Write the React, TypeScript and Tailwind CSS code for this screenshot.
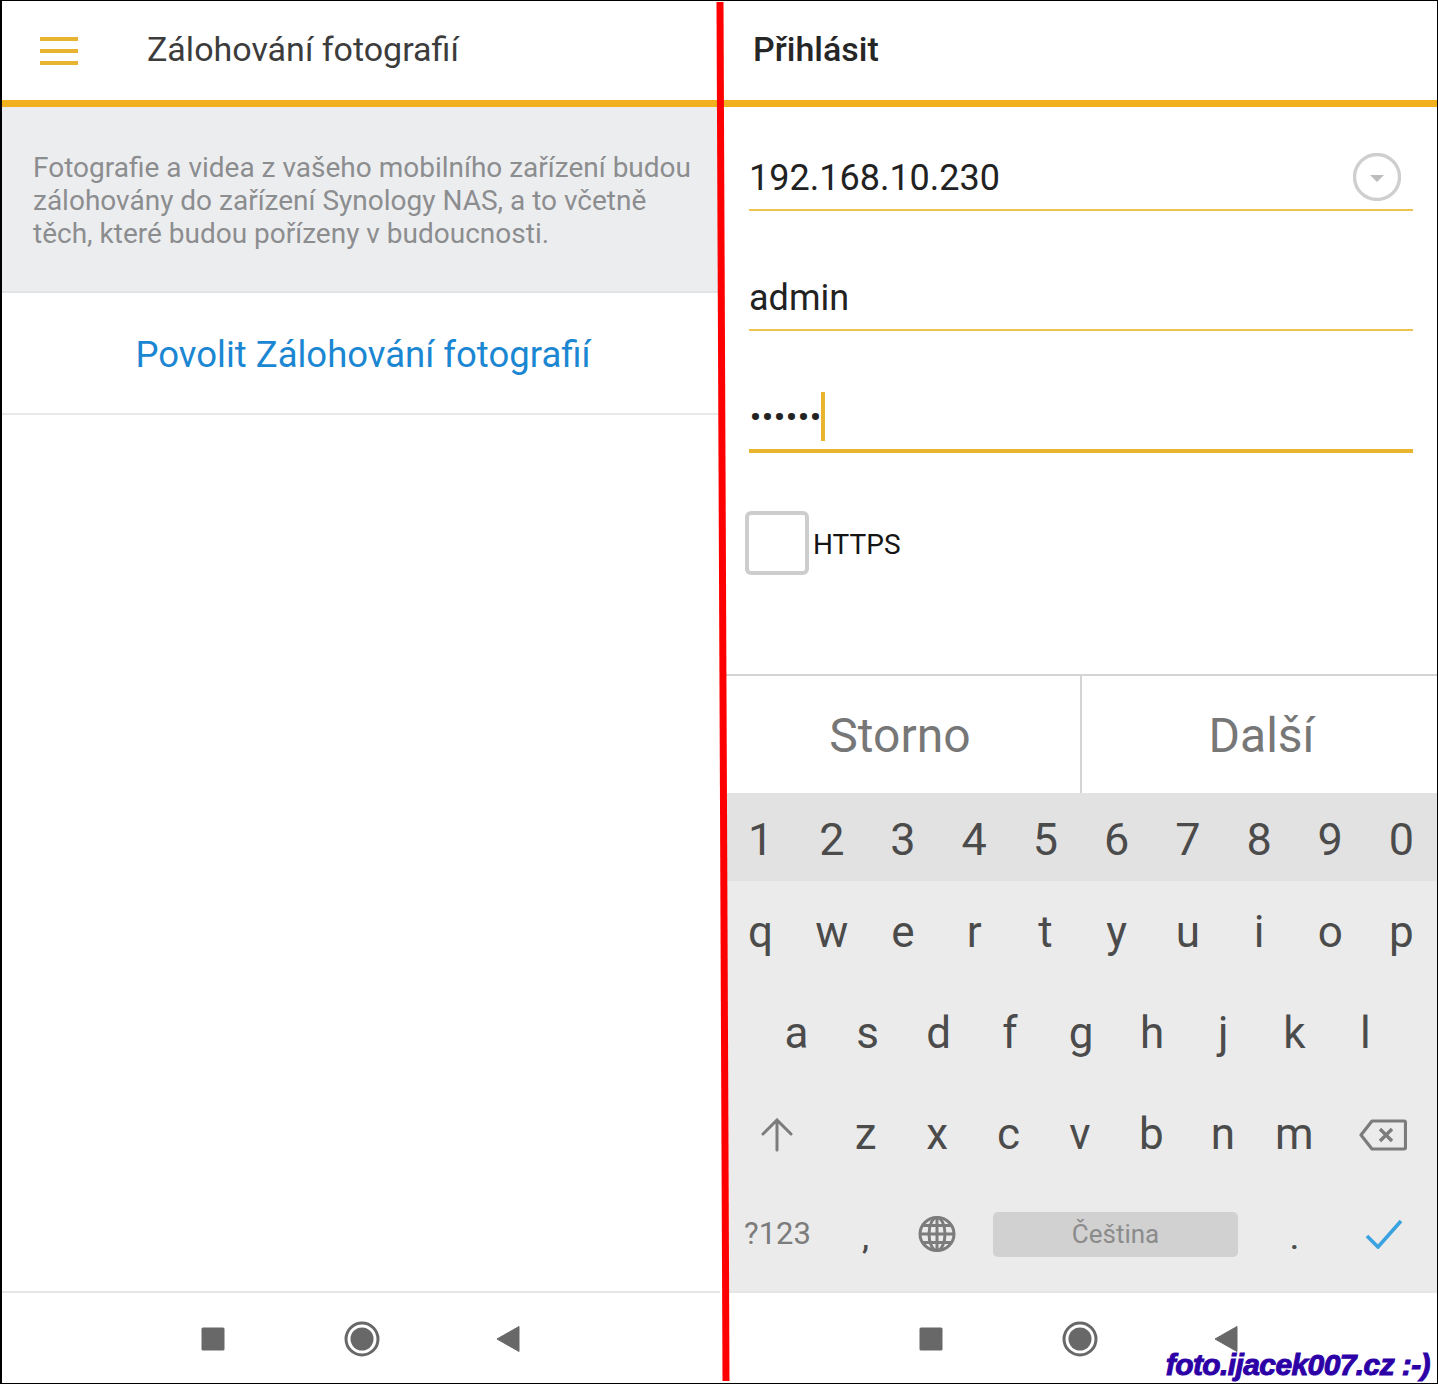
const NUMBER_KEYS = ['1', '2', '3', '4', '5', '6', '7', '8', '9', '0']
const TOP_KEYS = ['q', 'w', 'e', 'r', 't', 'y', 'u', 'i', 'o', 'p']
const HOME_KEYS = ['a', 's', 'd', 'f', 'g', 'h', 'j', 'k', 'l']
const BOTTOM_KEYS = ['z', 'x', 'c', 'v', 'b', 'n', 'm']

function Hamburger(): JSX.Element {
  return (
    <svg width="38" height="28" viewBox="0 0 38 28" aria-hidden="true" className="block">
      <rect x="0" y="0" width="38" height="4" fill="#e9b332" />
      <rect x="0" y="12" width="38" height="4" fill="#e9b332" />
      <rect x="0" y="24" width="38" height="4" fill="#e9b332" />
    </svg>
  )
}

/** Android three-button bar; the same on both phone screens. */
function NavBar({ className = '' }: { className?: string }): JSX.Element {
  return (
    <div
      className={`flex h-[92px] items-center justify-center gap-[119px] border-t-2 border-[#e6e6e6] bg-white pt-[2px] ${className}`}
    >
      <svg width="24" height="24" viewBox="0 0 24 24" aria-hidden="true" className="block">
        <rect x="0.5" y="0.5" width="23" height="23" rx="1.5" fill="#686868" />
      </svg>
      <svg width="36" height="36" viewBox="0 0 36 36" aria-hidden="true" className="block">
        <circle cx="18" cy="18" r="16" fill="none" stroke="#686868" strokeWidth="3" />
        <circle cx="18" cy="18" r="11.5" fill="#686868" />
      </svg>
      <svg width="24" height="28" viewBox="0 0 24 28" aria-hidden="true" className="-ml-[3px] mr-[3px] block">
        <path d="M1 14 L23 1.5 V26.5 Z" fill="#686868" stroke="#686868" strokeLinejoin="round" />
      </svg>
    </div>
  )
}

function Key({ label, className = 'text-[44px]' }: { label: string; className?: string }): JSX.Element {
  return (
    <span className={`flex flex-1 items-center justify-center leading-none text-[#4b4b4b] ${className}`}>
      {label}
    </span>
  )
}

function Field({
  thick = false,
  children
}: {
  thick?: boolean
  children?: React.ReactNode
}): JSX.Element {
  return (
    <div
      className={`flex items-center justify-between pb-[4px] ${
        thick ? 'h-[64px] border-b-4 border-[#eab52e]' : 'h-[60px] border-b-2 border-[#ecc250]'
      }`}
    >
      {children}
    </div>
  )
}

function FieldValue({ value }: { value: string }): JSX.Element {
  return <span className="text-[36px] leading-none text-[#222222]">{value}</span>
}

function BackupScreen(): JSX.Element {
  return (
    <section className="flex w-[718px] shrink-0 flex-col">
      <header className="flex h-[99px] items-center pl-[38px]">
        <Hamburger />
        <h1 className="ml-[69px] pb-[2px] text-[34px] font-normal text-[#3c3c3c]">Zálohování fotografií</h1>
      </header>
      <div className="h-[7px] bg-[#f2b01e]" />
      <div className="h-[186px] border-b-2 border-[#e2e3e5] bg-[#ecedef] pl-[31px] pt-[44px] text-[28px] leading-[33px] text-[#8c8d8f]">
        <p>Fotografie a videa z vašeho mobilního zařízení budou</p>
        <p>zálohovány do zařízení Synology NAS, a to včetně</p>
        <p>těch, které budou pořízeny v budoucnosti.</p>
      </div>
      <div className="flex h-[122px] items-center justify-center border-b-2 border-[#e8e8e8] pl-[4px] pt-[5px] text-[36.5px] text-[#1b87d2]">
        Povolit Zálohování fotografií
      </div>
      <div className="flex-1" />
      <NavBar className="pl-[2px]" />
    </section>
  )
}

function LoginScreen(): JSX.Element {
  return (
    <section className="flex min-w-0 flex-1 flex-col">
      <header className="flex h-[99px] items-center pl-[30px]">
        <h1 className="pb-[2px] text-[34px] font-medium text-[#262626]">Přihlásit</h1>
      </header>
      <div className="h-[7px] bg-[#f2b01e]" />

      <div className="flex h-[568px] flex-col pl-[26px] pr-[24px] pt-[44px]">
        <Field>
          <FieldValue value="192.168.10.230" />
          <svg width="48" height="48" viewBox="0 0 48 48" aria-hidden="true" className="mr-[12px] mb-[2px] block">
            <circle cx="24" cy="24" r="22.5" fill="none" stroke="#cfcfcf" strokeWidth="3.4" />
            <path d="M17 22 H31 L24 29 Z" fill="#bdbdbd" />
          </svg>
        </Field>
        <div className="mt-[60px]">
          <Field>
            <FieldValue value="admin" />
          </Field>
        </div>
        <div className="mt-[58px]">
          <Field thick>
            <span className="flex items-center pl-[1px]">
              <span className="text-[30px] font-bold leading-none tracking-[1.2px] text-[#222222]">••••••</span>
              <span className="ml-[-1px] h-[49px] w-[4px] bg-[#eab52e]" />
            </span>
          </Field>
        </div>
        <label className="-ml-[4px] mt-[58px] flex items-center">
          <span className="h-[64px] w-[64px] rounded-[6px] border-4 border-[#cdcdcd] bg-white" />
          <span className="ml-[4px] pt-[4px] text-[28px] leading-none text-[#151515]">HTTPS</span>
        </label>
      </div>

      <div className="flex h-[119px] border-t-2 border-[#d4d4d4] text-[48px] text-[#777777]">
        <span className="flex w-[359px] items-center justify-center border-r-2 border-[#d4d4d4] pr-[3px] pt-[2px]">
          Storno
        </span>
        <span className="flex flex-1 items-center justify-center pl-[4px] pt-[2px]">Další</span>
      </div>

      <div className="flex h-[498px] flex-col bg-[#ebebeb] pb-[8px]">
        <div className="flex h-[88px] bg-[#e2e2e2] pl-[2px] pt-[4px]">
          {NUMBER_KEYS.map((k) => (
            <Key key={k} label={k} className="text-[45px]" />
          ))}
        </div>
        <div className="flex h-[102px] pl-[2px]">
          {TOP_KEYS.map((k) => (
            <Key key={k} label={k} />
          ))}
        </div>
        <div className="flex h-[101px] pb-[2px] pl-[38px] pr-[36px]">
          {HOME_KEYS.map((k) => (
            <Key key={k} label={k} />
          ))}
        </div>
        <div className="flex h-[101px]">
          <span className="flex w-[107px] items-center justify-center">
            <svg width="34" height="34" viewBox="0 0 34 34" aria-hidden="true" className="block">
              <path d="M17 32 V3 M3 16 L17 2 L31 16" fill="none" stroke="#7c7c7c" strokeWidth="3" strokeLinecap="round" />
            </svg>
          </span>
          {BOTTOM_KEYS.map((k) => (
            <Key key={k} label={k} className="pb-[2px] text-[44px]" />
          ))}
          <span className="flex w-[107px] items-center justify-center">
            <svg width="48" height="32" viewBox="0 0 48 32" aria-hidden="true" className="block">
              <path d="M13 2 H45 a1.5 1.5 0 0 1 1.5 1.5 V28.5 a1.5 1.5 0 0 1 -1.5 1.5 H13 L2 16 Z" fill="none" stroke="#7c7c7c" strokeWidth="3.2" strokeLinejoin="round" />
              <path d="M21 10 L33 22 M33 10 L21 22" fill="none" stroke="#7c7c7c" strokeWidth="3.4" />
            </svg>
          </span>
        </div>
        <div className="flex h-[98px] items-center">
          <span className="flex w-[107px] items-center justify-center pl-[2px] text-[31px] text-[#7c7c7c]">?123</span>
          <span className="flex w-[71px] justify-center pt-[8px] text-[32px] font-medium text-[#4b4b4b]">,</span>
          <span className="flex w-[71px] justify-center">
            <svg width="38" height="36" viewBox="0 0 38 36" aria-hidden="true" className="block">
              <g fill="none" stroke="#7c7c7c" strokeWidth="3">
                <ellipse cx="19" cy="18" rx="17" ry="16.5" />
                <ellipse cx="19" cy="18" rx="8" ry="16.5" />
                <path d="M19 1.5 V34.5 M2 18 H36 M4.5 9.5 H33.5 M4.5 26.5 H33.5" />
              </g>
            </svg>
          </span>
          <span className="flex flex-1 justify-center px-[21px]">
            <span className="flex h-[45px] w-full items-center justify-center rounded-[5px] bg-[#d1d1d1] text-[26px] text-[#8b8b8b]">
              Čeština
            </span>
          </span>
          <span className="flex w-[71px] justify-center pt-[8px] text-[32px] font-medium text-[#4b4b4b]">.</span>
          <span className="flex w-[107px] items-center justify-center">
            <svg width="38" height="30" viewBox="0 0 38 30" aria-hidden="true" className="block">
              <path d="M2 17 L13 28 L36 2" fill="none" stroke="#3aa2de" strokeWidth="3.6" />
            </svg>
          </span>
        </div>
      </div>

      <NavBar />
    </section>
  )
}

export default function App(): JSX.Element {
  return (
    <div className="relative h-[1384px] w-[1438px] overflow-hidden font-['Roboto',sans-serif]">
      <div className="flex h-full border-y-[1px] border-r-[1px] border-l-[2px] border-black bg-white">
        <BackupScreen />
        <div className="w-[3px] shrink-0" />
        <LoginScreen />
      </div>

      {/* Hand-drawn divider laid over both screenshots */}
      <svg width="1438" height="1384" viewBox="0 0 1438 1384" aria-hidden="true" className="pointer-events-none absolute inset-0">
        <path d="M720 2 L726 1381" stroke="#ff0000" strokeWidth="7" fill="none" />
      </svg>

      <span className="absolute right-[8px] bottom-[1px] font-['Liberation_Sans',sans-serif] text-[30px] font-bold italic leading-[36px] tracking-[-0.6px] text-[#2c00a6] [-webkit-text-stroke:1px_#2c00a6]">
        foto.ijacek007.cz :-)
      </span>
    </div>
  )
}
